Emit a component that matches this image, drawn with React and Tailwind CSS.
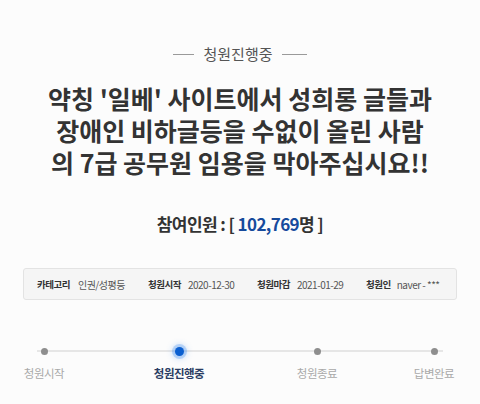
import React from "react";

const KR = { fontFamily: '"Noto Sans CJK KR", "Noto Sans", sans-serif' };

function Step({ label, active, className }) {
  return (
    <div className={"flex w-[60px] flex-col items-center " + className}>
      <div className="flex h-[10px] items-center justify-center">
        {active ? (
          <span className="block h-[9px] w-[9px] rounded-full bg-[#0b5fd0] shadow-[0_0_0_3px_rgba(60,140,240,0.28),0_0_6px_3px_rgba(60,140,240,0.25)]" />
        ) : (
          <span className="block h-[7px] w-[7px] rounded-full bg-[#8e8e8e]" />
        )}
      </div>
      <div
        className={
          "mt-[8px] whitespace-nowrap text-[11.5px] leading-[18px] tracking-[-0.5px] " +
          (active ? "font-bold text-[#2a3d63]" : "text-[#a9a9a9]")
        }
      >
        {label}
      </div>
    </div>
  );
}

export default function App() {
  return (
    <div
      className="flex h-[404px] w-[480px] flex-col items-center overflow-hidden bg-[#fcfcfc]"
      style={KR}
    >
      <div className="mt-[44px] flex items-center">
        <span className="block h-px w-[21px] bg-[#9a9a9a]" />
        <span className="mx-[9px] text-[15px] leading-[20px] text-[#555]">청원진행중</span>
        <span className="block h-px w-[25px] bg-[#9a9a9a]" />
      </div>

      <h1 className="mt-[18px] flex flex-col items-center text-[25px] font-bold leading-[32px] text-[#333]">
        <span className="block h-[32px] whitespace-nowrap">약칭 '일베' 사이트에서 성희롱 글들과</span>
        <span className="block h-[32px] whitespace-nowrap">장애인 비하글등을 수없이 올린 사람</span>
        <span className="block h-[32px] whitespace-nowrap">의 7급 공무원 임용을 막아주십시요!!</span>
      </h1>

      <div className="mt-[34px] text-[17px] font-bold leading-[24px] tracking-[-0.6px] text-[#333]">
        참여인원 : [ <span className="text-[#164a9c]">102,769</span>명 ]
      </div>

      <div className="mt-[32px] grid h-[32px] w-[434px] grid-cols-[111px_109px_109px_auto] items-center rounded-[3px] border border-[#e3e3e3] bg-[#f5f5f5] pl-[13px] tracking-[-0.5px]">
        <div className="flex items-center gap-[8px]">
          <span className="text-[9.5px] font-bold text-[#333]">카테고리</span>
          <span className="text-[10px] text-[#555]">인권/성평등</span>
        </div>
        <div className="flex items-center gap-[7px]">
          <span className="text-[9.5px] font-bold text-[#333]">청원시작</span>
          <span className="text-[10px] text-[#555]">2020-12-30</span>
        </div>
        <div className="flex items-center gap-[7px]">
          <span className="text-[9.5px] font-bold text-[#333]">청원마감</span>
          <span className="text-[10px] text-[#555]">2021-01-29</span>
        </div>
        <div className="flex items-center gap-[6px]">
          <span className="text-[9.5px] font-bold text-[#333]">청원인</span>
          <span className="text-[10px] text-[#555]">naver - ***</span>
        </div>
      </div>

      <div className="relative mt-[46px] flex w-[480px]">
        <div className="absolute left-[37px] top-[4px] h-[2px] w-[406px] bg-[#e6e6e6]" />
        <Step label="청원시작" className="relative ml-[14px]" />
        <Step label="청원진행중" active className="relative ml-[75px]" />
        <Step label="청원종료" className="relative ml-[78px]" />
        <Step label="답변완료" className="relative ml-[57px]" />
      </div>
    </div>
  );
}
